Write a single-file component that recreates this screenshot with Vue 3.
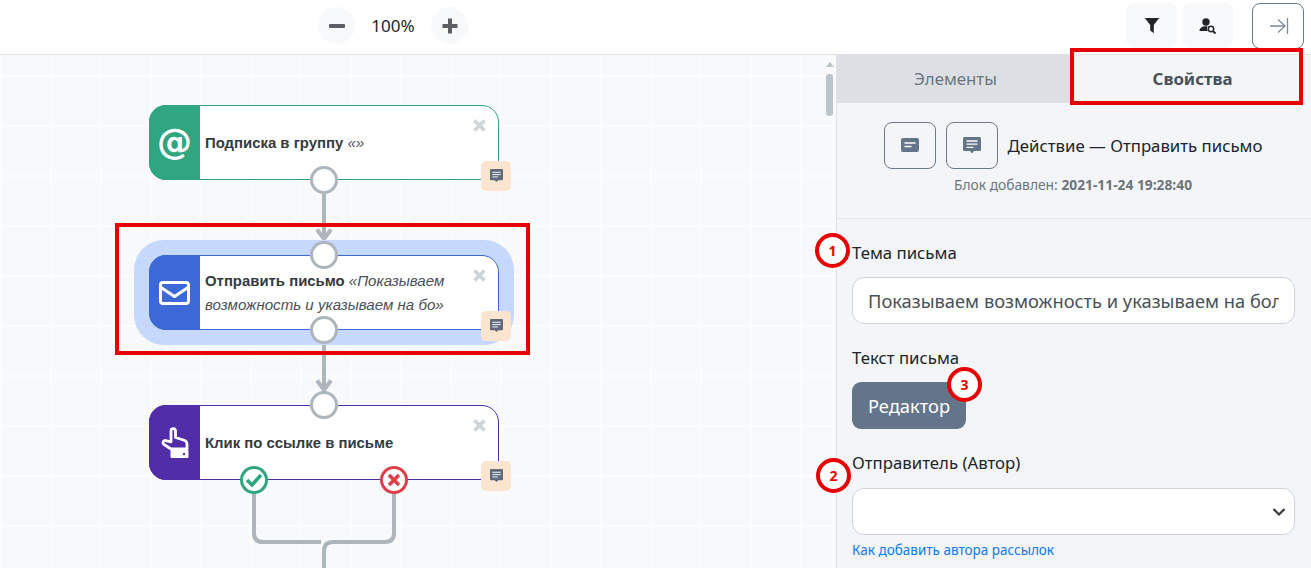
<template>
  <div class="page">
    <header class="topbar">
      <div class="zoom">
        <button class="round"><svg width="18" height="18" viewBox="0 0 18 18"><rect x="1" y="7" width="16" height="4" rx="1" fill="#5c6066" /></svg></button>
        <span class="zoom-val">100%</span>
        <button class="round"><svg width="18" height="18" viewBox="0 0 18 18"><path d="M7 1.500h4V7h5.500v4H11v5.500H7V11H1.500V7H7z" fill="#5c6066" /></svg></button>
      </div>
      <div class="tools">
        <button class="tool">
          <svg width="16" height="17" viewBox="0 0 16 17"><path d="M.8 1h14.400L9.800 8v8.200L6.200 13.600V8z" fill="#212529" /></svg>
        </button>
        <button class="tool">
          <svg width="18" height="18" viewBox="0 0 18 18">
            <circle cx="7" cy="5" r="3.700" fill="#212529" />
            <path d="M.5 14c0-3 2.500-4.800 6.500-4.800 1 0 1.500.1 1.500.1-.8 1.500-.6 3.300.4 4.700z" fill="#212529" />
            <circle cx="12" cy="12" r="2.700" fill="none" stroke="#212529" stroke-width="1.500" />
            <path d="M14 14l2.500 2.500" stroke="#212529" stroke-width="1.800" />
          </svg>
        </button>
        <button class="collapse">
          <svg width="22" height="20" viewBox="0 0 22 20" fill="none" stroke="#7d8b9c" stroke-width="1.300"><path d="M3 10h15.500M11 3.500l7 6.500-7 6.500M20.500 2v16" /></svg>
        </button>
      </div>
    </header>

    <main class="body">
      <section class="canvas">
        <svg class="links" width="836" height="513" viewBox="0 0 836 513" fill="none" stroke="#adb5bd" stroke-width="4">
          <path d="M324 135v49M317 174.500l7 9.500 7-9.500" />
          <path d="M324 285v50M317 325.500l7 9.500 7-9.500" />
          <path d="M254 430v48q0 9 9 9h58" />
          <path d="M394 430v48q0 9-9 9h-52q-9 0-9 9v30" />
        </svg>

        <div class="glow"></div>

        <article v-for="n in nodes" :key="n.id" class="node" :class="n.id" :style="{ top: n.top + 'px', borderColor: n.color }">
          <div class="node-icon" :style="{ background: n.color }">
            <span v-if="n.id === 'sub'" class="at">@</span>
            <svg v-else-if="n.id === 'mail'" width="31" height="24" viewBox="0 0 31 24" fill="none" stroke="#fff" stroke-width="3" stroke-linejoin="round">
              <rect x="1.500" y="1.500" width="28" height="21" rx="2.500" />
              <path d="M2 6.500l13.500 9 13.500-9" />
            </svg>
            <svg v-else width="28" height="32" viewBox="0 0 28 32" fill="none" stroke="#fff" stroke-width="2.800" stroke-linejoin="round">
              <path d="M10 15V4c0-3.300 4.500-3.300 4.500 0v6.500l8 2.500c2 .6 3.500 1.800 3.500 4V22H10L3 17.500c-2.600-2 .2-5.300 2.700-3.600z" />
              <rect x="9.500" y="23" width="18" height="8" rx="1" fill="#fff" stroke="none" />
              <circle cx="23" cy="27" r="1.200" fill="#512da8" stroke="none" />
            </svg>
          </div>
          <div class="node-text">
            <b>{{ n.title }}</b> <i>{{ n.note }}</i>
          </div>
          <svg class="close" width="13" height="13" viewBox="0 0 13 13" stroke="#ced4da" stroke-width="3.600"><path d="M1.500 1.500l10 10M11.500 1.500l-10 10" /></svg>
          <div class="note-btn">
            <svg width="13" height="14" viewBox="0 0 14 15"><path d="M1 0h12a1 1 0 011 1v10a1 1 0 01-1 1H9l-2 2-2-2H1a1 1 0 01-1-1V1a1 1 0 011-1z" fill="#5f6b7a" /><path d="M2.500 3.500h9M2.500 6h9M2.500 8.500h6" stroke="#fff" stroke-width="1" /></svg>
          </div>
        </article>

        <span v-for="p in ports" :key="p.x + '-' + p.y" class="port" :style="{ left: p.x - 14 + 'px', top: p.y - 14 + 'px' }"></span>

        <span class="port ok">
          <svg width="18" height="16" viewBox="0 0 18 16" fill="none" stroke="#2fa67f" stroke-width="3.600"><path d="M2 8l5 5 9-10" /></svg>
        </span>
        <span class="port bad">
          <svg width="14" height="14" viewBox="0 0 14 14" fill="none" stroke="#dc3f4a" stroke-width="3.600"><path d="M2 2l10 10M12 2L2 12" /></svg>
        </span>

        <div class="scroll"><span class="arrow"></span><span class="thumb"></span></div>
        <div class="mark mark-node"></div>
      </section>

      <aside class="panel">
        <nav class="tabs">
          <div class="tab">Элементы</div>
          <div class="tab active">Свойства</div>
        </nav>
        <div class="info">
          <div class="info-row">
            <button class="square">
              <svg width="18" height="15" viewBox="0 0 18 15"><rect width="18" height="14" rx="2" fill="#64748b" /><path d="M3.500 5h11M3.500 8.500h7" stroke="#fff" stroke-width="1.500" /></svg>
            </button>
            <button class="square">
              <svg width="18" height="18" viewBox="0 0 18 18"><path d="M1.500 0h15A1.500 1.500 0 0118 1.500v11a1.500 1.500 0 01-1.500 1.500H11l-2 2.500L7 14H1.500A1.500 1.500 0 010 12.500v-11A1.500 1.500 0 011.500 0z" fill="#64748b" /><path d="M3.500 4h11M3.500 7.200h11M3.500 10.400h7" stroke="#fff" stroke-width="1.300" /></svg>
            </button>
            <span class="info-title">Действие — Отправить письмо</span>
          </div>
          <div class="info-date">Блок добавлен: <b>2021-11-24 19:28:40</b></div>
        </div>
        <form class="fields" @submit.prevent>
          <div class="field">
            <label for="subject">Тема письма</label>
            <input id="subject" type="text" value="Показываем возможность и указываем на боль" />
            <span class="badge b1">1</span>
          </div>
          <div class="field">
            <label>Текст письма</label>
            <div class="editor-wrap">
              <button class="editor">Редактор</button>
              <span class="badge b3">3</span>
            </div>
          </div>
          <div class="field">
            <label for="author">Отправитель (Автор)</label>
            <div class="select">
              <select id="author"></select>
              <svg width="14" height="10" viewBox="0 0 14 10" fill="none" stroke="#343a40" stroke-width="2.200"><path d="M1.500 2l5.500 5.500L12.500 2" /></svg>
            </div>
            <span class="badge b2">2</span>
            <a class="help">Как добавить автора рассылок</a>
          </div>
        </form>
        <div class="mark mark-tab"></div>
      </aside>
    </main>
  </div>
</template>

<script setup>
const nodes = [
  { id: 'sub', top: 50, color: '#2fa67f', title: 'Подписка в группу', note: '«»' },
  { id: 'mail', top: 200, color: '#3d68d8', title: 'Отправить письмо', note: '«Показываем возможность и указываем на бо»' },
  { id: 'click', top: 350, color: '#512da8', title: 'Клик по ссылке в письме', note: '' },
]
const ports = [
  { x: 324, y: 125 },
  { x: 324, y: 200 },
  { x: 324, y: 275 },
  { x: 324, y: 350 },
]
</script>

<style>
html,
body {
  margin: 0;
  overflow: hidden;
}
</style>

<style scoped>
.page {
  width: 1311px;
  height: 568px;
  overflow: hidden;
  display: flex;
  flex-direction: column;
  font-family: "Noto Sans", sans-serif;
  color: #212529;
  background: #fff;
}
button {
  font-family: inherit;
  padding: 0;
  display: flex;
  align-items: center;
  justify-content: center;
}

/* top bar */
.topbar {
  height: 55px;
  flex: none;
  box-sizing: border-box;
  border-bottom: 1px solid #dee2e6;
  display: flex;
  justify-content: space-between;
  padding: 3px 7px 0 318px;
}
.zoom {
  display: flex;
  align-items: flex-start;
  padding-top: 4px;
}
.round {
  width: 37px;
  height: 37px;
  border: 0;
  border-radius: 50%;
  background: #f8f9fa;
}
.zoom-val {
  width: 76px;
  text-align: center;
  font-size: 17px;
  line-height: 38px;
}
.tools {
  display: flex;
  align-items: flex-start;
}
.tool {
  width: 51px;
  height: 45px;
  border: 0;
  border-radius: 8px;
  background: #f8f9fa;
  margin-right: 5px;
}
.collapse {
  width: 52px;
  height: 46px;
  margin-left: 14px;
  box-sizing: border-box;
  border: 1px solid #6c7a8d;
  border-radius: 8px;
  background: #fff;
}

.body {
  flex: 1;
  display: flex;
  min-height: 0;
}

/* canvas */
.canvas {
  position: relative;
  width: 836px;
  flex: none;
  overflow: hidden;
  background-color: #f8f9fb;
  background-image:
    linear-gradient(#fbfcfd 2px, transparent 2px),
    linear-gradient(90deg, #fbfcfd 2px, transparent 2px);
  background-size: 50px 50px;
  background-position: 0 20px;
}
.links {
  position: absolute;
  left: 0;
  top: 0;
}
.glow {
  position: absolute;
  left: 134px;
  top: 185px;
  width: 380px;
  height: 105px;
  border-radius: 30px;
  background: #c7d8fd;
}
.node {
  position: absolute;
  left: 149px;
  width: 350px;
  height: 75px;
  box-sizing: border-box;
  border: 1px solid;
  border-radius: 17px;
  background: #fff;
  display: flex;
  align-items: center;
}
.node-icon {
  align-self: stretch;
  width: 51px;
  margin: -1px 0 -1px -1px;
  flex: none;
  border-radius: 17px 0 0 17px;
  display: flex;
  align-items: center;
  justify-content: center;
}
.at {
  color: #fff;
  font: bold 35px/1 "DejaVu Sans", sans-serif;
}
.node-text {
  padding: 1px 40px 0 5px;
  font: 14.900px/23px "Liberation Sans", Arial, sans-serif;
  color: #343a40;
}
.node-text i {
  font-size: 15.100px;
  color: #495057;
}
.close {
  position: absolute;
  right: 12px;
  top: 13px;
}
.note-btn {
  position: absolute;
  left: 331px;
  top: 55px;
  width: 30px;
  height: 30px;
  border-radius: 5px;
  background: #fbe5d0;
  display: flex;
  align-items: center;
  justify-content: center;
}
.port {
  position: absolute;
  width: 28px;
  height: 28px;
  box-sizing: border-box;
  border: 3px solid #adb5bd;
  border-radius: 50%;
  background: #fff;
  display: flex;
  align-items: center;
  justify-content: center;
}
.port.ok {
  left: 240px;
  top: 411px;
  border-color: #2fa67f;
}
.port.bad {
  left: 380px;
  top: 411px;
  border-color: #dc3f4a;
}
.scroll {
  position: absolute;
  right: 1px;
  top: 0;
  bottom: 0;
  width: 10px;
}
.arrow {
  position: absolute;
  left: 1px;
  top: 7px;
  border: 4px solid transparent;
  border-top: 0;
  border-bottom: 5px solid #bcc4cc;
}
.thumb {
  position: absolute;
  left: 1px;
  top: 19px;
  width: 7px;
  height: 42px;
  border-radius: 3px;
  background: #bcc4cc;
}
.mark {
  position: absolute;
  box-sizing: border-box;
  border: 4px solid #e60000;
  pointer-events: none;
}
.mark-node {
  left: 115px;
  top: 168px;
  width: 415px;
  height: 132px;
}

/* right panel */
.panel {
  position: relative;
  flex: 1;
  min-width: 0;
  background: #f3f5f8;
  border-left: 1px solid #dee2e6;
}
.tabs {
  display: flex;
  height: 48px;
}
.tab {
  flex: 1;
  text-align: center;
  font-size: 16.800px;
  line-height: 48px;
  color: #6c757d;
  background: #dce0e5;
}
.tab.active {
  color: #495057;
  font-weight: 700;
  background: #f3f5f8;
}
.info {
  height: 116px;
  box-sizing: border-box;
  padding: 19px 2px 0 0;
  border-bottom: 1px solid #e3e6ea;
  text-align: center;
}
.info-row {
  display: flex;
  align-items: center;
  justify-content: center;
  gap: 10px;
}
.square {
  width: 52px;
  height: 47px;
  box-sizing: border-box;
  border: 1px solid #6c7a8d;
  border-radius: 8px;
  background: transparent;
}
.info-title {
  font-size: 16.800px;
  line-height: 47px;
}
.info-date {
  margin-top: 7px;
  font-size: 13.800px;
  line-height: 18px;
  color: #6c757d;
}
.fields {
  padding: 22px 16px 0 15px;
}
.field {
  position: relative;
  margin-bottom: 22px;
}
label {
  display: block;
  font-size: 16.800px;
  line-height: 24px;
  margin-bottom: 12px;
}
input,
select {
  display: block;
  width: 100%;
  height: 47px;
  box-sizing: border-box;
  border: 1px solid #ced4da;
  border-radius: 12px;
  background: #fff;
  padding: 0 15px;
  font: 18.300px "Noto Sans", sans-serif;
  color: #495057;
  appearance: none;
  outline: 0;
}
.select {
  position: relative;
  margin-top: 13px;
}
.select svg {
  position: absolute;
  right: 9px;
  top: 19px;
}
.editor-wrap {
  display: block;
  width: 114px;
  position: relative;
}
.editor {
  width: 114px;
  height: 47px;
  border: 0;
  border-radius: 9px;
  background: #64748b;
  color: #fff;
  font-size: 18.300px;
}
.help {
  display: block;
  margin-top: 6px;
  font-size: 13.500px;
  line-height: 18px;
  color: #0d7ae6;
}
.badge {
  position: absolute;
  width: 35px;
  height: 35px;
  box-sizing: border-box;
  border: 4px solid #e60000;
  border-radius: 50%;
  background: #fff;
  color: #e60000;
  font-size: 14px;
  font-weight: 700;
  line-height: 27px;
  text-align: center;
}
.b1 {
  left: -37px;
  top: -8px;
}
.b2 {
  left: -36px;
  top: 7px;
}
.b3 {
  left: 95px;
  top: -15px;
}
.mark-tab {
  left: 233px;
  top: -7px;
  width: 233px;
  height: 57px;
}
</style>
